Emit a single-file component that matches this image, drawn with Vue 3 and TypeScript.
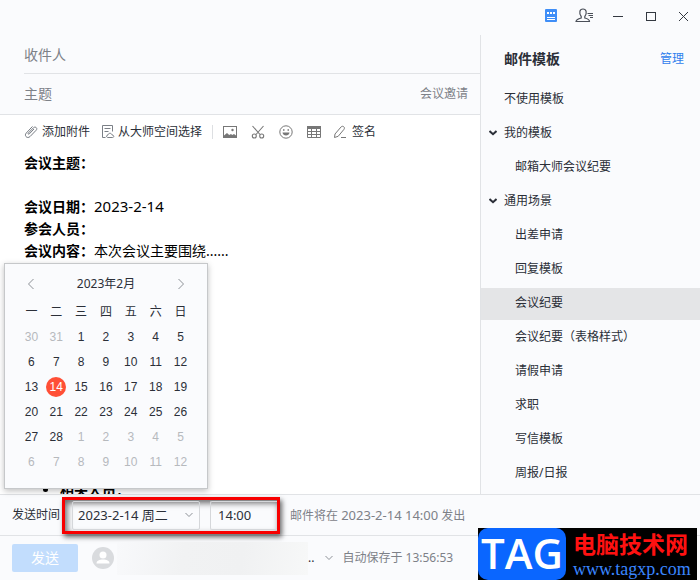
<script setup lang="ts">
import { computed, ref } from 'vue'

interface TemplateEntry {
  label: string
  kind: 'plain' | 'group' | 'child'
}

interface DayCell {
  day: number
  current: boolean
}

const templates: TemplateEntry[] = [
  { label: '不使用模板', kind: 'plain' },
  { label: '我的模板', kind: 'group' },
  { label: '邮箱大师会议纪要', kind: 'child' },
  { label: '通用场景', kind: 'group' },
  { label: '出差申请', kind: 'child' },
  { label: '回复模板', kind: 'child' },
  { label: '会议纪要', kind: 'child' },
  { label: '会议纪要（表格样式）', kind: 'child' },
  { label: '请假申请', kind: 'child' },
  { label: '求职', kind: 'child' },
  { label: '写信模板', kind: 'child' },
  { label: '周报/日报', kind: 'child' },
]

const activeTemplate = ref('会议纪要')
const weekdays = ['一', '二', '三', '四', '五', '六', '日']
const year = 2023
const month = 2
const selectedDay = ref(14)
const recipient = ref('')
const subject = ref('')
const sendTime = ref('14:00')

// Six Monday-first weeks covering the displayed month.
const weeks = computed<DayCell[][]>(() => {
  const offset = (new Date(year, month - 1, 1).getDay() + 6) % 7
  return Array.from({ length: 6 }, (_, w) =>
    Array.from({ length: 7 }, (_, d) => {
      const date = new Date(year, month - 1, 1 - offset + w * 7 + d)
      return { day: date.getDate(), current: date.getMonth() === month - 1 }
    }),
  )
})

function pick(cell: DayCell): void {
  if (cell.current) selectedDay.value = cell.day
}
</script>

<template>
  <div class="window">
    <header class="titlebar">
      <button type="button" aria-label="模板">
        <svg width="20" height="20" viewBox="0 0 20 20">
          <rect x="3" y="3" width="12" height="13" rx="1" fill="#3f8ef7" />
          <path d="M5 7h2M8 7h2M11 7h2" stroke="#fff" stroke-width="2" />
          <path d="M5 11.500h8M5 13.500h8" stroke="#fff" />
        </svg>
      </button>
      <button type="button" aria-label="联系人">
        <svg width="20" height="20" viewBox="0 0 20 20" fill="none" stroke="#4a4f58" stroke-width="1.2">
          <path d="M1 15.500h13.500c0-2-1.300-2.600-4.700-3.500v-1.500c1.400-1.500 1.700-3.300 1.300-5.200C10.700 3.700 9.600 3 8 3S5.200 3.800 4.900 5.300c-.4 1.900 0 3.700 1.300 5.200V12C3 12.900 1 13.500 1 15.500z" />
          <path d="M12.500 7.500H18M13.500 9.500H18M15 11.500h3" stroke-width="1" />
        </svg>
      </button>
      <button type="button" aria-label="最小化">
        <svg width="20" height="20" viewBox="0 0 20 20"><path d="M5 10.500h10" stroke="#333840" /></svg>
      </button>
      <button type="button" aria-label="最大化">
        <svg width="20" height="20" viewBox="0 0 20 20"><rect x="5.500" y="6.500" width="9" height="8" fill="none" stroke="#333840" /></svg>
      </button>
      <button type="button" aria-label="关闭">
        <svg width="20" height="20" viewBox="0 0 20 20"><path d="M5 6l9 9M14 6l-9 9" stroke="#333840" /></svg>
      </button>
    </header>

    <div class="main">
      <main class="compose">
        <div class="fields">
          <div class="field">
            <label for="recipient">收件人</label>
            <input id="recipient" v-model="recipient" type="text" />
          </div>
          <div class="field last">
            <label for="subject">主题</label>
            <input id="subject" v-model="subject" type="text" />
            <button type="button" class="invite">会议邀请</button>
          </div>
        </div>

        <div class="toolbar">
          <button type="button">
            <svg width="14" height="14" viewBox="0 0 14 14" fill="none" stroke="#777c83">
              <path d="M10 4L5.300 8.900c-.8.800-1.700 0-.9-.9l5-5.200c1.900-1.900 4.600.4 2.800 2.400l-6.100 6.300c-2.700 2.700-6.400-.7-3.800-3.500l6.200-6.600" />
            </svg>
            添加附件
          </button>
          <button type="button" class="space">
            <svg width="14" height="14" viewBox="0 0 14 14" fill="none" stroke="#7b8087">
              <path d="M4.500 12.500h-3v-12h10v6M3.500 3.500h6M3.500 6.500h4" />
              <path d="M6.500 12.500c-1.500-.5-1.200-2.500.5-2.500.3-2.300 3.600-2.300 4 0 2.200 0 2.300 2.500.5 2.500z" />
            </svg>
            从大师空间选择
          </button>
          <span class="divider"></span>
          <button type="button" aria-label="图片">
            <svg width="14" height="14" viewBox="0 0 14 14">
              <rect x=".5" y="1.500" width="13" height="11" fill="none" stroke="#777" />
              <path d="M1 12v-1.500L4 8l2.200 2L8 9l1.200 1L11 9l2 1.500V12z" fill="#777" />
              <circle cx="9.500" cy="5" r="1.200" fill="#777" />
            </svg>
          </button>
          <button type="button" aria-label="剪切">
            <svg width="14" height="14" viewBox="0 0 14 14" fill="none" stroke="#777" stroke-width="1.100">
              <path d="M1.500 1L9 9.500M12.500 1L5 9.500" />
              <circle cx="3.300" cy="11" r="2" /><circle cx="10.700" cy="11" r="2" />
            </svg>
          </button>
          <button type="button" aria-label="表情">
            <svg width="14" height="14" viewBox="0 0 14 14">
              <circle cx="7" cy="7" r="6.200" fill="none" stroke="#777" />
              <path d="M3.500 7.500h7c-.3 4-6.700 4-7 0z" fill="#777" />
              <path d="M4 5h1.500M8.500 5H10" stroke="#777" stroke-width="1.500" />
            </svg>
          </button>
          <button type="button" aria-label="表格">
            <svg width="14" height="14" viewBox="0 0 14 14">
              <path d="M0 1h14v3H0z" fill="#777" />
              <path d="M.5 3v9.500h13V3M0 6.500h14M0 9.500h14M4.500 4v8M9.500 4v8" fill="none" stroke="#777" />
            </svg>
          </button>
          <button type="button" class="sign">
            <svg width="14" height="14" viewBox="0 0 14 14" fill="none" stroke="#777">
              <path d="M2 9l6-7c1.700-1.900 4.500.3 3 2.300l-5.800 7L1.500 12.500zM8 12.500h5" />
            </svg>
            签名
          </button>
        </div>

        <article class="editor">
          <p><b>会议主题：</b></p>
          <p class="blank"></p>
          <p><b>会议日期：</b><span class="num">2023-2-14</span></p>
          <p><b>参会人员：</b></p>
          <p><b>会议内容：</b>本次会议主要围绕......</p>
          <ul><li><b>相关人员：</b></li></ul>
        </article>
      </main>

      <aside class="sidebar">
        <div class="sidebar-head">
          <h2>邮件模板</h2>
          <a href="#">管理</a>
        </div>
        <ul class="templates">
          <li v-for="item in templates" :key="item.label">
            <button
              type="button"
              :class="[item.kind, { active: item.label === activeTemplate }]"
              @click="activeTemplate = item.label"
            >
              <svg v-if="item.kind === 'group'" width="8" height="6" viewBox="0 0 8 6" fill="none" stroke="#2b2f38" stroke-width="2">
                <path d="M.5 1L4 4.200 7.500 1" />
              </svg>
              {{ item.label }}
            </button>
          </li>
        </ul>
      </aside>
    </div>

    <footer class="footer">
      <section class="calendar" aria-label="选择日期">
        <div class="cal-head">
          <button type="button" aria-label="上个月">
            <svg width="8" height="12" viewBox="0 0 8 12" fill="none" stroke="#8d9197"><path d="M6.500 1l-5 5 5 5" /></svg>
          </button>
          <span>{{ year }}年{{ month }}月</span>
          <button type="button" aria-label="下个月">
            <svg width="8" height="12" viewBox="0 0 8 12" fill="none" stroke="#8d9197"><path d="M1.500 1l5 5-5 5" /></svg>
          </button>
        </div>
        <table>
          <thead>
            <tr><th v-for="d in weekdays" :key="d" scope="col">{{ d }}</th></tr>
          </thead>
          <tbody>
            <tr v-for="(week, w) in weeks" :key="w">
              <td v-for="(cell, i) in week" :key="i">
                <button
                  type="button"
                  :class="{ muted: !cell.current, selected: cell.current && cell.day === selectedDay }"
                  @click="pick(cell)"
                >{{ cell.day }}</button>
              </td>
            </tr>
          </tbody>
        </table>
      </section>

      <div class="schedule">
        <label for="send-date">发送时间</label>
        <div class="highlight">
          <div class="date-field">
            <select id="send-date">
              <option>2023-2-14 周二</option>
            </select>
            <svg width="8" height="6" viewBox="0 0 8 6" fill="none" stroke="#8d9197"><path d="M.5 1L4 4.500 7.500 1" /></svg>
          </div>
          <input v-model="sendTime" class="time" type="text" aria-label="时间" />
        </div>
        <span class="hint">邮件将在 <span class="digits">2023-2-14 14:00</span> 发出</span>
      </div>

      <div class="actions">
        <button type="button" class="send" disabled>发送</button>
        <svg class="avatar" width="22" height="22" viewBox="0 0 22 22">
          <circle cx="11" cy="11" r="11" fill="#d9dbde" />
          <circle cx="11" cy="8" r="3.500" fill="#fff" />
          <path d="M4.500 16.500c0-3 3-4 6.500-4s6.500 1 6.500 4z" fill="#fff" />
        </svg>
        <span class="account"></span>
        <span class="dots">..</span>
        <button type="button" class="more" aria-label="切换帐号">
          <svg width="8" height="6" viewBox="0 0 8 6" fill="none" stroke="#8d9197"><path d="M.5 1L4 4.500 7.500 1" /></svg>
        </button>
        <span class="saved">自动保存于 13:56:53</span>
      </div>
    </footer>

    <div class="brand">
      <span class="tag">TAG</span>
      <span class="brand-text">
        <strong>电脑技术网</strong>
        <span class="url">www.tagxp.com</span>
      </span>
    </div>
  </div>
</template>

<style>
html,
body,
#app {
  height: 100%;
}
</style>

<style scoped>
.window {
  position: relative;
  display: flex;
  flex-direction: column;
  box-sizing: border-box;
  min-height: 100%;
  overflow: hidden;
  background: #fafbfd;
  color: #2b2f38;
  font-family: 'Noto Sans', 'Noto Sans CJK SC', sans-serif;
  font-size: 12px;
  line-height: 20px;
}
button,
input,
select {
  box-sizing: border-box;
  margin: 0;
  padding: 0;
  border: 0;
  background: none;
  color: inherit;
  font: inherit;
}
svg {
  display: block;
  flex: none;
}
ul,
p,
h2 {
  margin: 0;
  padding: 0;
}
.titlebar {
  display: flex;
  justify-content: flex-end;
  align-items: center;
  gap: 9px;
  height: 35px;
  padding: 0 4px 3px;
  box-sizing: border-box;
}
.titlebar button {
  display: flex;
  justify-content: center;
  width: 24px;
}
.main {
  display: flex;
  flex: 1;
}
.compose {
  flex: 1;
  display: flex;
  flex-direction: column;
  min-width: 0;
}
.fields {
  padding-left: 24px;
  border-bottom: 1px solid #e1e3e6;
  color: #7d8188;
}
.field {
  display: flex;
  align-items: center;
  height: 36px;
  padding-top: 2px;
  border-bottom: 1px solid #e1e3e6;
  font-size: 14px;
}
.field.last {
  height: 40px;
  padding-top: 0;
  border: 0;
}
.field input {
  flex: 1;
  min-width: 0;
  padding-left: 8px;
  outline: none;
}
.invite {
  padding-right: 12px;
  font-size: 12px;
}
.toolbar {
  display: flex;
  align-items: center;
  gap: 14px;
  height: 34px;
  padding-left: 24px;
  background: #fff;
}
.toolbar button {
  display: flex;
  align-items: center;
  gap: 4px;
  white-space: nowrap;
}
.toolbar .space {
  margin-left: -3px;
  gap: 3px;
}
.divider {
  width: 1px;
  height: 14px;
  margin: 0 -4px;
  background: #dddfe2;
}
.toolbar .sign {
  gap: 5px;
  margin-left: -2px;
}
.editor {
  flex: 1 1 0px;
  min-height: 0;
  overflow: hidden;
  padding: 3px 24px 0;
  box-sizing: border-box;
  background: #fff;
  color: #000;
  font-size: 14px;
  line-height: 22px;
}
.editor p {
  height: 22px;
}
.num {
  font-size: 15px;
  line-height: 20px;
}
.editor ul {
  margin-top: 217px;
  padding-left: 36px;
}
.sidebar {
  width: 220px;
  box-sizing: border-box;
  border-left: 1px solid #e1e3e6;
}
.sidebar-head {
  display: flex;
  justify-content: space-between;
  align-items: center;
  height: 47px;
  padding: 0 16px 0 23px;
}
h2 {
  font-size: 14px;
}
.sidebar a {
  color: #2f80ed;
  text-decoration: none;
}
.templates {
  list-style: none;
}
.templates li {
  padding-top: 2px;
}
.templates button {
  display: flex;
  align-items: center;
  gap: 7px;
  width: 100%;
  height: 32px;
  padding: 0 0 2px 34px;
  text-align: left;
}
.templates .plain {
  padding-left: 23px;
}
.templates .group {
  padding-left: 8px;
}
.templates .active {
  background: #e4e5e7;
}
.footer {
  position: relative;
  border-top: 1px solid #e1e3e6;
}
.schedule {
  display: flex;
  align-items: center;
  height: 40px;
  padding-left: 12px;
  border-bottom: 1px solid #e1e3e6;
  white-space: nowrap;
}
.highlight {
  display: flex;
  gap: 10px;
  box-sizing: border-box;
  height: 37px;
  margin: 0 10px 0 2px;
  padding: 1px 0 1px 7px;
  border: 3px solid #f80000;
  box-shadow: 2px 3px 5px rgba(0, 0, 0, 0.6), inset 2px 3px 6px rgba(0, 0, 0, 0.6);
}
.date-field {
  display: flex;
  align-items: center;
  width: 128px;
  box-sizing: border-box;
  padding-right: 6px;
  border: 1px solid #d5d7da;
  border-radius: 2px;
}
select {
  flex: 1;
  min-width: 0;
  padding-left: 5px;
  appearance: none;
  font-size: 13px;
  outline: none;
}
.time {
  width: 67px;
  padding-left: 7px;
  border: 1px solid #d5d7da;
  border-right: 0;
  border-radius: 2px 0 0 2px;
  font-size: 13px;
}
.hint,
.saved {
  color: #7d8188;
}
.digits {
  font-size: 13px;
}
.actions {
  display: flex;
  align-items: center;
  height: 44px;
  padding-left: 12px;
  white-space: nowrap;
}
.send {
  width: 66px;
  height: 28px;
  border-radius: 2px;
  background: #c2ddfd;
  color: #fff;
  font-size: 14px;
}
.avatar {
  margin: 0 3px 0 14px;
}
.account {
  width: 191px;
  height: 33px;
  background: linear-gradient(100deg, #f8f9fb, #f1f2f3 35%, #f0f1f2 65%, #f7f8f8);
}
.more {
  margin: 0 9px 0 11px;
}
.calendar {
  position: absolute;
  bottom: 100%;
  left: 4px;
  z-index: 1;
  width: 204px;
  margin-bottom: 6px;
  padding: 4px 14px 14px;
  box-sizing: border-box;
  border: 1px solid #c6c8ca;
  background: #fafbfd;
  box-shadow: 0 2px 6px rgba(0, 0, 0, 0.25);
}
.cal-head {
  display: flex;
  justify-content: space-between;
  align-items: center;
  height: 31px;
  padding: 0 8px;
}
table {
  width: 100%;
  table-layout: fixed;
  border-collapse: collapse;
}
th,
td {
  height: 25px;
  padding: 0;
  text-align: center;
  font-weight: 400;
}
td {
  font-family: 'Liberation Sans', sans-serif;
}
td button {
  display: block;
  width: 20px;
  height: 20px;
  margin: 0 auto;
  border-radius: 50%;
  line-height: 20px;
}
.muted {
  color: #b6b9bd;
}
.selected {
  background: #ff4f36;
  color: #fff;
}
.brand {
  position: absolute;
  right: 3px;
  bottom: 0;
  z-index: 2;
  display: flex;
  gap: 7px;
  width: 219px;
  height: 52px;
  background: #000;
}
.tag {
  width: 88px;
  border-radius: 10px;
  background: #0a66ff;
  color: #fff;
  font-family: 'Open Sans', sans-serif;
  font-size: 42px;
  font-weight: 600;
  line-height: 50px;
  text-align: center;
}
.brand-text {
  display: flex;
  flex-direction: column;
}
.brand strong {
  color: #f11;
  font-family: 'Noto Sans CJK SC', sans-serif;
  font-size: 23px;
  line-height: 31px;
}
.url {
  color: #3a86ff;
  font-family: 'Liberation Serif', serif;
  font-size: 18px;
  line-height: 21px;
}
</style>
